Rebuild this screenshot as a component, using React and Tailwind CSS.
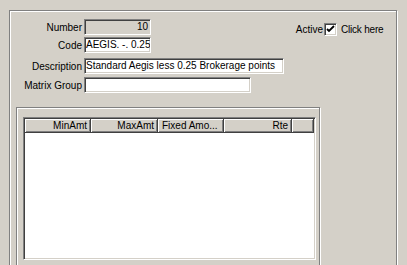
import React from 'react';

const sunken =
  'border border-t-[#808080] border-l-[#808080] border-b-white border-r-white shadow-[inset_1px_1px_0_#404040,inset_-1px_-1px_0_#d4d0c8]';

function Field({ label, width, value, disabled, right, className = '' }) {
  return (
    <div className={`flex items-center gap-[2px] ${className}`}>
      <div className="w-[72px] text-right whitespace-nowrap">{label}</div>
      <div
        className={`${sunken} h-[16px] overflow-hidden whitespace-nowrap leading-[14px] ${
          disabled ? 'bg-[#d4d0c8]' : 'bg-white'
        } ${right ? 'text-right pr-[2px]' : 'pl-[1px]'}`}
        style={{ width }}
      >
        {value}
      </div>
    </div>
  );
}

const cols = [
  { title: 'MinAmt', w: 'w-[66px]', align: 'text-right pr-[3px]' },
  { title: 'MaxAmt', w: 'w-[67px]', align: 'text-right pr-[3px]' },
  { title: 'Fixed Amo...', w: 'w-[66px]', align: 'text-left pl-[4px]' },
  { title: 'Rte', w: 'w-[68px]', align: 'text-right pr-[3px]' },
];

export default function App() {
  return (
    <div className="w-[407px] h-[265px] overflow-hidden bg-[#d4d0c8] pt-[10px] pl-[9px] font-['Liberation_Sans',Arial,sans-serif] text-[10px] leading-[13px] text-black">
      {/* outer etched frame */}
      <div className="w-[388px] h-[280px] border border-[#808080] shadow-[inset_1px_1px_0_#fff,1px_1px_0_#fff]">
        <div className="pt-[8px]">
          <div className="flex items-start">
            <Field label="Number" width={67} value="10" disabled right />
            <div className="ml-[143px] mt-[4px] flex items-center">
              <span className="w-[29px] text-right">Active</span>
              <span
                className={`${sunken} ml-[1px] w-[13px] h-[13px] bg-white flex items-center justify-center`}
              >
                <svg width="9" height="9" viewBox="0 0 9 9">
                  <path d="M1 4 L3 6 L8 1" fill="none" stroke="#000" strokeWidth="1.8" />
                </svg>
              </span>
              <span className="ml-[4px] tracking-[-0.2px]">Click here</span>
            </div>
          </div>
          <Field label="Code" width={67} value="AEGIS. -. 0.25" className="mt-[1px]" />
          <Field
            label="Description"
            width={200}
            value="Standard Aegis less 0.25 Brokerage points"
            className="mt-[5px]"
          />
          <Field label="Matrix Group" width={167} value="" className="mt-[3px]" />
        </div>

        {/* inner etched frame */}
        <div className="ml-[6px] mt-[14px] w-[304px] h-[200px] border border-[#808080] shadow-[inset_1px_1px_0_#fff,1px_1px_0_#fff] pl-[6px] pt-[9px]">
          <div className={`${sunken} w-[293px] h-[143px] bg-white p-[1px] flex flex-col`}>
            <div className="flex h-[14px] bg-[#d4d0c8]">
              {cols.map((c) => (
                <div
                  key={c.title}
                  className={`${c.w} ${c.align} h-full border-r border-b border-r-[#404040] border-b-[#404040] shadow-[inset_1px_1px_0_#fff,inset_-1px_-1px_0_#808080] leading-[13px] whitespace-nowrap overflow-hidden`}
                >
                  {c.title}
                </div>
              ))}
              <div className="flex-1 h-full border-r border-b border-r-[#404040] border-b-[#404040] shadow-[inset_1px_1px_0_#fff,inset_-1px_-1px_0_#808080]" />
            </div>
            <div className="flex-1 bg-white" />
          </div>
        </div>
      </div>
    </div>
  );
}
